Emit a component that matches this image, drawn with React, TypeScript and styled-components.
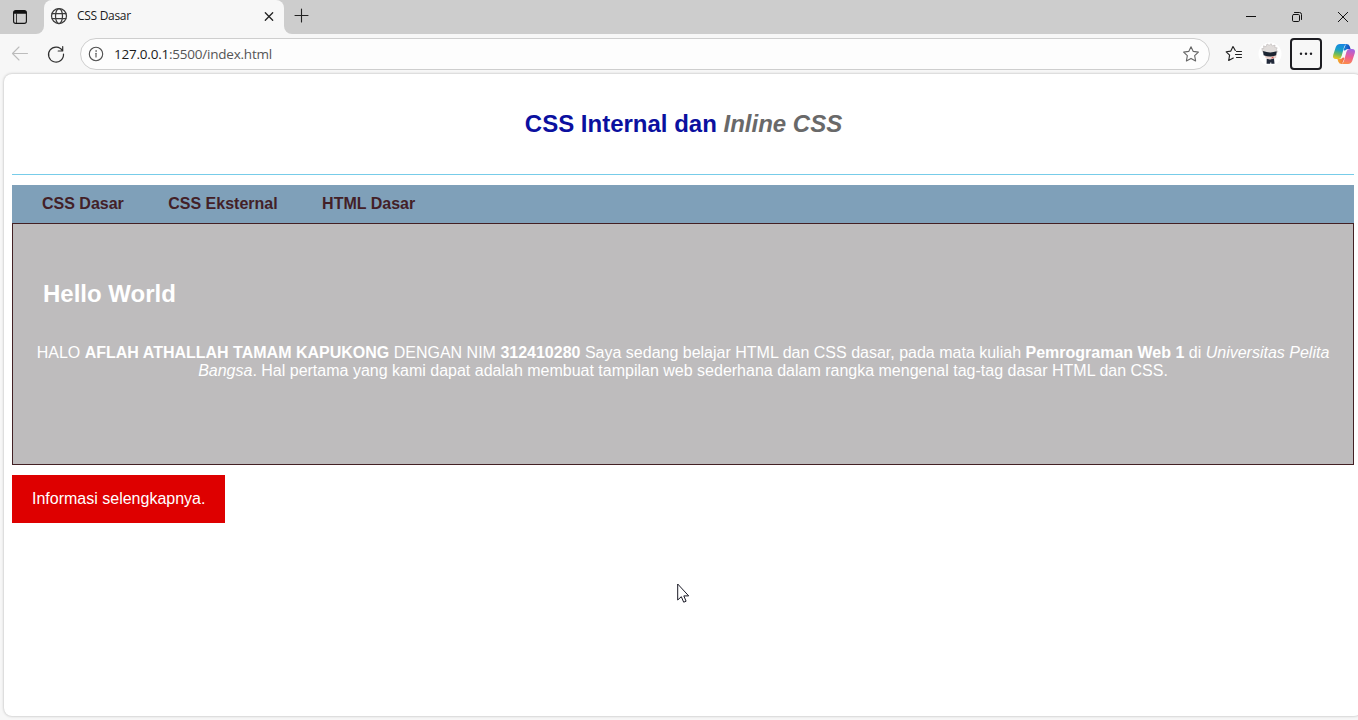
import React from "react";
import styled, { createGlobalStyle } from "styled-components";

const GlobalStyle = createGlobalStyle`
  * { box-sizing: border-box; }
  body { margin: 0; overflow: hidden; background: #f7f7f7; }
`;

const Window = styled.div`
  width: 1358px;
  height: 720px;
  display: flex;
  flex-direction: column;
  background: #f7f7f7;
  overflow: hidden;
  position: relative;
  font-family: "Open Sans", "Noto Sans", sans-serif;
  color: #1b1b1b;
`;

const TabStrip = styled.div`
  height: 34px;
  flex: none;
  display: flex;
  background: #f7f7f7;
`;

const TabActions = styled.div`
  width: 44px;
  padding: 8px 0 0 12px;
  border-bottom-right-radius: 8px;
  background: #cdcdcd;
`;

const TabBacking = styled.div`
  background: linear-gradient(#cdcdcd 50%, #f7f7f7 50%);
`;

const Tab = styled.div`
  width: 240px;
  height: 34px;
  padding: 0 8px 2px 6px;
  display: flex;
  align-items: center;
  gap: 9px;
  background: #f7f7f7;
  border-radius: 8px 8px 0 0;
`;

const TabTitle = styled.span`
  flex: 1;
  font-size: 12px;
  line-height: 16px;
  letter-spacing: -0.3px;
`;

const StripRest = styled.div`
  flex: 1;
  display: flex;
  justify-content: space-between;
  padding: 8px 7px 0 9px;
  background: #cdcdcd;
  border-bottom-left-radius: 8px;
`;

const WindowButtons = styled.div`
  display: flex;
  gap: 30px;
`;

const Toolbar = styled.div`
  height: 40px;
  flex: none;
  display: flex;
  align-items: center;
  padding: 0 2px 0 10px;
`;

const IconSlot = styled.div<{ $after?: number }>`
  display: flex;
  flex: none;
  margin-right: ${(p) => p.$after ?? 0}px;
`;

const AddressBar = styled.div`
  width: 1130px;
  height: 32px;
  flex: none;
  display: flex;
  align-items: center;
  padding: 0 9px 0 7px;
  border: 1px solid #cecece;
  border-radius: 16px;
  background: #fdfdfd;
  margin-right: 15px;
`;

const Url = styled.span`
  flex: 1;
  margin-left: 10px;
  font-size: 13.5px;
  line-height: 20px;
  letter-spacing: -0.22px;
  color: #555;
  b { font-weight: 400; color: #1b1b1b; }
`;

const MenuButton = styled.div`
  width: 32px;
  height: 32px;
  flex: none;
  display: flex;
  align-items: center;
  justify-content: center;
  border: 2px solid #1d1d22;
  border-radius: 4px;
  margin-right: 10px;
`;

const Page = styled.div`
  width: 1358px;
  height: 642px;
  flex: none;
  margin-left: 4px;
  padding: 8px;
  background: #fff;
  border-radius: 8px;
  box-shadow: 0 0 3px rgba(0, 0, 0, 0.28);
  font-family: "Liberation Sans", Arial, sans-serif;
  font-size: 16px;
  line-height: 18px;
`;

const Header = styled.header`
  height: 93px;
  padding: 28px 0 0 1px;
  border-bottom: 1px solid #77cce9;
  text-align: center;
`;

const Title = styled.h1`
  margin: 0;
  font-size: 24px;
  line-height: 28px;
  color: #0b109f;
  i { color: #696969; }
`;

const Nav = styled.nav`
  height: 38px;
  margin-top: 10px;
  padding: 10px 30px;
  display: flex;
  gap: 44.45px;
  background: #7fa0b9;
`;

const NavLink = styled.a`
  font-weight: 700;
  color: #432027;
`;

const Hero = styled.section`
  height: 242px;
  padding: 56px 20px 0;
  border: 1px solid #432024;
  background: #bebcbd;
  color: #fff;
`;

const HeroTitle = styled.h2`
  margin: 0 0 36px 10px;
  font-size: 24px;
  line-height: 28px;
`;

const Intro = styled.p`
  margin: 0;
  text-align: center;
  white-space: nowrap;
`;

const InfoButton = styled.a`
  display: inline-block;
  width: 213px;
  height: 48px;
  margin-top: 10px;
  padding: 15px 20px;
  background: #de0000;
  color: #fff;
  white-space: nowrap;
`;

const Pointer = styled.svg`
  position: absolute;
  left: 677px;
  top: 583px;
`;

const stroke = (color: string, width = 1) => ({
  fill: "none",
  stroke: color,
  strokeWidth: width,
  strokeLinecap: "round" as const,
  strokeLinejoin: "round" as const,
});

const TabMenuIcon = () => (
  <svg width="16" height="16" viewBox="0 0 16 16">
    <rect x="1.6" y="1.6" width="12.8" height="12.8" rx="2.2" {...stroke("#111", 1.1)} />
    <path d="M1.500 4.800V4a2.500 2.500 0 0 1 2.500-2.500h8A2.500 2.500 0 0 1 14.500 4v.8z" fill="#111" />
    <path d="M4.500 5v9" {...stroke("#111", 0.8)} />
  </svg>
);

const GlobeIcon = () => (
  <svg width="18" height="18" viewBox="0 0 18 18" {...stroke("#3c3c3c", 1.25)}>
    <circle cx="9" cy="9" r="7.5" />
    <ellipse cx="9" cy="9" rx="3.5" ry="7.500" />
    <path d="M2.200 6.500h13.600M2.200 11.500h13.600" />
  </svg>
);

const CloseTabIcon = () => (
  <svg width="14" height="14" viewBox="0 0 14 14" {...stroke("#222", 1.3)}>
    <path d="M3.300 3.800l7.400 7.400M10.700 3.800l-7.400 7.400" />
  </svg>
);

const PlusIcon = () => (
  <svg width="16" height="16" viewBox="0 0 16 16" {...stroke("#222", 1.1)}>
    <path d="M8.500 1v13M2 7.500h13" />
  </svg>
);

const MinimizeIcon = () => (
  <svg width="16" height="16" viewBox="0 0 16 16">
    <path d="M3 8.500h10" stroke="#111" />
  </svg>
);

const RestoreIcon = () => (
  <svg width="16" height="16" viewBox="0 0 16 16" {...stroke("#111", 1)}>
    <rect x="3.500" y="6.500" width="7" height="7" rx="1.200" />
    <path d="M5.500 4.500h5a2 2 0 0 1 2 2v5" />
  </svg>
);

const CloseIcon = () => (
  <svg width="16" height="16" viewBox="0 0 16 16" {...stroke("#111", 1)}>
    <path d="M3.300 4.300l9.400 9.400M12.700 4.300l-9.400 9.400" />
  </svg>
);

const BackIcon = () => (
  <svg width="20" height="20" viewBox="0 0 20 20" {...stroke("#bcbcbc", 1.1)}>
    <path d="M17.500 9.500h-15M9 3L2.500 9.500 9 16" />
  </svg>
);

const ReloadIcon = () => (
  <svg width="20" height="20" viewBox="0 0 20 20" {...stroke("#303030", 1.2)}>
    <path d="M16.500 6.800A7.500 7.500 0 1 0 17.500 10M16.700 2.500v4.500h-4.500" />
  </svg>
);

const InfoIcon = () => (
  <svg width="16" height="16" viewBox="0 0 16 16" {...stroke("#505050", 1.1)}>
    <circle cx="8" cy="8" r="6.700" />
    <path d="M8 7.300v3.700" />
    <circle cx="8" cy="5" r="0.400" fill="#505050" strokeWidth="0.600" />
  </svg>
);

const StarIcon = () => (
  <svg width="18" height="18" viewBox="0 0 18 18" {...stroke("#666", 1.1)}>
    <path d="M9 1.700l2.250 4.700 5.150.7-3.750 3.600.95 5.200L9 13.400l-4.600 2.500.95-5.200L1.600 7.100l5.150-.7z" />
  </svg>
);

const FavoritesIcon = () => (
  <svg width="18" height="18" viewBox="0 0 18 18" {...stroke("#222", 1.15)}>
    <path d="M10.300 5.500L8 1.500 5.800 6.100l-4.600.7 3.400 3.400-.9 5.300L8.300 13M11.500 6.500H16.500M10.500 9.500H16.500M11.500 12.500H16.500" />
  </svg>
);

const Avatar = () => (
  <svg width="24" height="24" viewBox="0 0 24 24">
    <circle cx="12" cy="12" r="11.500" fill="#fff" />
    <path d="M4.500 10L3.800 6.500l2 .1-.3-2.800 2.500 1 1-2.800 2.200 1.200 2-1.500.9 2.200 3-.8-.3 2.400 2.400.3-.8 2 1.300 1.900-1.900 2H6.500z" fill="#e0dcda" stroke="#b5afaf" strokeWidth=".5" />
    <path d="M6.300 12h12v3.500l-3 1.700h-5l-3-1.700z" fill="#ead2cc" />
    <path d="M5 9q7 2.600 13.700.3l-.5 4q-6 2.500-12.600 0z" fill="#1c2532" />
    <path d="M8.700 16.700l3.300.8 4-1 .5 5.300h-3.200v-1.200h-1v1.200H8.600z" fill="#222a3b" />
    <path d="M13.500 16l2-.7" stroke="#d94545" strokeWidth="1" />
  </svg>
);

const DotsIcon = () => (
  <svg width="16" height="16" viewBox="0 0 16 16" fill="#1d1d22">
    <circle cx="3" cy="7.800" r="1.200" />
    <circle cx="8" cy="7.800" r="1.200" />
    <circle cx="13" cy="7.800" r="1.200" />
  </svg>
);

const CopilotIcon = () => (
  <svg width="24" height="24" viewBox="0 0 24 24">
    <defs>
      <linearGradient id="left" x1=".6" y1="0" x2=".4" y2="1">
        <stop offset="0" stopColor="#1787e3" />
        <stop offset=".4" stopColor="#18a0c8" />
        <stop offset=".7" stopColor="#6dbb5a" />
        <stop offset="1" stopColor="#eac621" />
      </linearGradient>
      <linearGradient id="right" x1=".6" y1="0" x2=".4" y2="1">
        <stop offset="0" stopColor="#a263e2" />
        <stop offset=".5" stopColor="#ec5c97" />
        <stop offset="1" stopColor="#fb8b4a" />
      </linearGradient>
      <linearGradient id="top" x1="0" y1="0" x2="1" y2="0">
        <stop offset="0" stopColor="#1687df" />
        <stop offset="1" stopColor="#1748b8" />
      </linearGradient>
      <linearGradient id="bottom" x1="0" y1="0" x2="1" y2="0">
        <stop offset="0" stopColor="#f2b32b" />
        <stop offset="1" stopColor="#f2604d" />
      </linearGradient>
    </defs>
    <path d="M14 2q3 0 3.700 2.200L18.600 7H16q-2.200 0-2.900 2L11.500 8z" fill="url(#top)" />
    <path d="M8 2h6.500Q12.600 3 12 5.300L9.500 14.500Q8.700 17 6.500 17H4Q.2 17 1.200 13L3.800 5Q5 2 8 2z" fill="url(#left)" />
    <path d="M10 22q-3 0-3.700-2.200L5.400 17H8q2.200 0 2.900-2l1.600 1z" fill="url(#bottom)" />
    <path d="M16 22H9.500q1.900-1 2.500-3.300l2.500-9.200Q15.300 7 17.500 7H20q3.800 0 2.800 4l-2.600 8Q19 22 16 22z" fill="url(#right)" />
    <path d="M12.900 8.200L14.600 8.500 11.100 15.900 9.500 15z" fill="#f7f7f7" />
  </svg>
);

export default function App() {
  return (
    <Window>
      <GlobalStyle />
      <TabStrip>
        <TabActions><TabMenuIcon /></TabActions>
        <TabBacking>
          <Tab>
            <GlobeIcon />
            <TabTitle>CSS Dasar</TabTitle>
            <CloseTabIcon />
          </Tab>
        </TabBacking>
        <StripRest>
          <PlusIcon />
          <WindowButtons>
            <MinimizeIcon />
            <RestoreIcon />
            <CloseIcon />
          </WindowButtons>
        </StripRest>
      </TabStrip>
      <Toolbar>
        <IconSlot $after={16}><BackIcon /></IconSlot>
        <IconSlot $after={14}><ReloadIcon /></IconSlot>
        <AddressBar>
          <InfoIcon />
          <Url><b>127.0.0.1</b>:5500/index.html</Url>
          <StarIcon />
        </AddressBar>
        <IconSlot $after={15}><FavoritesIcon /></IconSlot>
        <IconSlot $after={8}><Avatar /></IconSlot>
        <MenuButton><DotsIcon /></MenuButton>
        <IconSlot><CopilotIcon /></IconSlot>
      </Toolbar>
      <Page>
        <Header>
          <Title>CSS Internal dan <i>Inline CSS</i></Title>
        </Header>
        <Nav>
          <NavLink>CSS Dasar</NavLink>
          <NavLink>CSS Eksternal</NavLink>
          <NavLink>HTML Dasar</NavLink>
        </Nav>
        <Hero>
          <HeroTitle>Hello World</HeroTitle>
          <Intro>
            HALO <b>AFLAH ATHALLAH TAMAM KAPUKONG</b> DENGAN NIM <b>312410280</b> Saya sedang belajar HTML dan CSS dasar, pada mata kuliah <b>Pemrograman Web 1</b> di <i>Universitas Pelita<br />Bangsa</i>. Hal pertama yang kami dapat adalah membuat tampilan web sederhana dalam rangka mengenal tag-tag dasar HTML dan CSS.
          </Intro>
        </Hero>
        <InfoButton>Informasi selengkapnya.</InfoButton>
      </Page>
      <Pointer width="14" height="22" viewBox="0 0 14 22">
        <path d="M.7 1v16l3.600-3.300 2.400 5.500 2.400-1-2.300-5.300h4.900z" fill="#fff" stroke="#1a1a26" strokeWidth="1" />
      </Pointer>
    </Window>
  );
}
